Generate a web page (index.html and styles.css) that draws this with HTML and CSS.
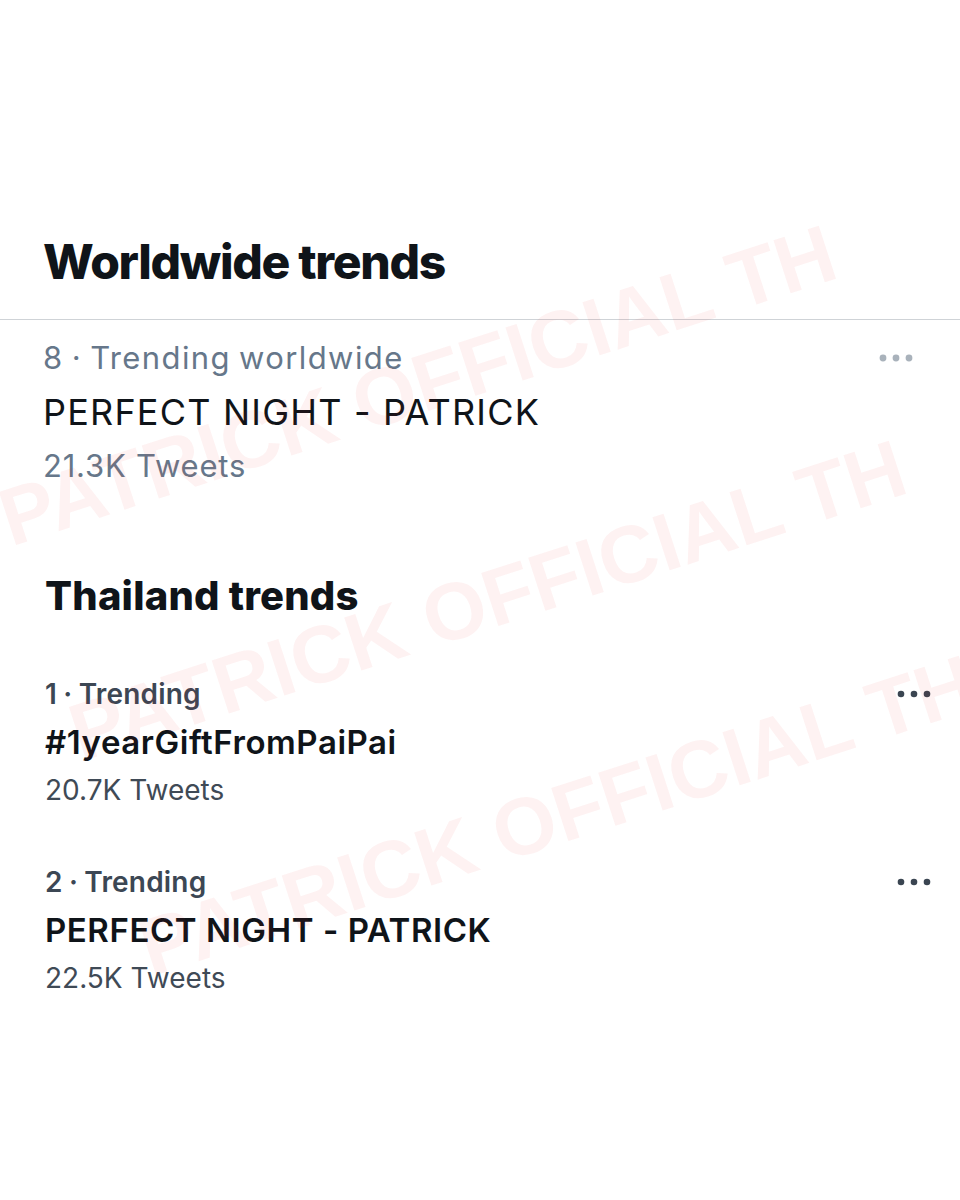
FILE: index.html
```html
<!DOCTYPE html>
<html lang="en">
<head>
  <meta charset="UTF-8">
  <title>Trends</title>
  <link rel="stylesheet" href="styles.css">
</head>
<body>
  <div class="pagina">

    <section class="painel painel-mundo">
      <div class="painel-topo">
        <h2 class="painel-titulo">Worldwide trends</h2>
      </div>

      <div class="trend">
        <div class="trend-textos">
          <div class="trend-meta">8 · Trending worldwide</div>
          <div class="trend-nome">PERFECT NIGHT - PATRICK</div>
          <div class="trend-total">21.3K Tweets</div>
        </div>
        <button class="trend-mais" aria-label="More">
          <svg width="34" height="8" viewBox="0 0 34 8"><circle cx="4" cy="4" r="3.4"/><circle cx="17" cy="4" r="3.4"/><circle cx="30" cy="4" r="3.4"/></svg>
        </button>
      </div>
    </section>

    <section class="painel painel-thai">
      <h2 class="painel-titulo">Thailand trends</h2>

      <div class="trend">
        <div class="trend-textos">
          <div class="trend-meta">1 · Trending</div>
          <div class="trend-nome">#1yearGiftFromPaiPai</div>
          <div class="trend-total">20.7K Tweets</div>
        </div>
        <button class="trend-mais" aria-label="More">
          <svg width="34" height="8" viewBox="0 0 34 8"><circle cx="4" cy="4" r="3.3"/><circle cx="17" cy="4" r="3.3"/><circle cx="30" cy="4" r="3.3"/></svg>
        </button>
      </div>

      <div class="trend">
        <div class="trend-textos">
          <div class="trend-meta">2 · Trending</div>
          <div class="trend-nome">PERFECT NIGHT - PATRICK</div>
          <div class="trend-total">22.5K Tweets</div>
        </div>
        <button class="trend-mais" aria-label="More">
          <svg width="34" height="8" viewBox="0 0 34 8"><circle cx="4" cy="4" r="3.3"/><circle cx="17" cy="4" r="3.3"/><circle cx="30" cy="4" r="3.3"/></svg>
        </button>
      </div>
    </section>

    <div class="marca-dagua" aria-hidden="true">
      <span class="marca marca-1">PATRICK OFFICIAL TH</span>
      <span class="marca marca-2">PATRICK OFFICIAL TH</span>
      <span class="marca marca-3">PATRICK OFFICIAL TH</span>
    </div>

  </div>
</body>
</html>
```

FILE: styles.css
```css
body {
  margin: 0;
  background: #ffffff;
  font-family: 'Inter', 'Liberation Sans', sans-serif;
  color: #0f1419;
}

.pagina {
  position: relative;
  width: 960px;
  height: 1200px;
  overflow: hidden;
  background: #ffffff;
}

/* ---- painel de cima (worldwide) ---- */

.painel-mundo {
  padding-top: 232px;
}

.painel-topo {
  padding: 0 0 27px 43px;
  border-bottom: 1px solid #cfd3d7;
}

.painel-titulo {
  margin: 0;
  font-weight: 700;
}

.painel-mundo .painel-titulo {
  font-size: 48px;
  line-height: 60px;
  font-weight: 800;
  letter-spacing: -1.3px;
}

.trend {
  display: flex;
  justify-content: space-between;
  align-items: flex-start;
}

.trend-textos {
  display: flex;
  flex-direction: column;
}

.trend-mais {
  background: none;
  border: none;
  padding: 0;
  display: flex;
  align-items: center;
  cursor: pointer;
}

.painel-mundo .trend {
  padding: 11px 47px 0 43px;
}

.painel-mundo .trend-meta,
.painel-mundo .trend-total {
  font-size: 31px;
  color: #66778a;
}

.painel-mundo .trend-meta {
  line-height: 54px;
  letter-spacing: 1.4px;
  word-spacing: -2px;
}

.painel-mundo .trend-nome {
  font-size: 36px;
  line-height: 54px;
  font-weight: 400;
  letter-spacing: 1.2px;
  color: #0f1419;
}

.painel-mundo .trend-total {
  line-height: 53px;
  letter-spacing: 0.8px;
}

.painel-mundo .trend-mais {
  height: 54px;
  fill: #a9b2bb;
}

/* ---- painel de baixo (thailand) ---- */

.painel-thai {
  padding: 79px 29px 0 45px;
}

.painel-thai .painel-titulo {
  font-size: 40px;
  line-height: 50px;
  font-weight: 800;
  letter-spacing: 0.2px;
  margin-bottom: 49px;
}

.painel-thai .trend + .trend {
  margin-top: 44px;
}

.painel-thai .trend-meta,
.painel-thai .trend-nome,
.painel-thai .trend-total {
  line-height: 48px;
}

.painel-thai .trend-meta {
  font-size: 28px;
  font-weight: 600;
  color: #3c4754;
  letter-spacing: 0.2px;
  word-spacing: -1px;
}

.painel-thai .trend-nome {
  font-size: 33px;
  font-weight: 600;
  letter-spacing: 0.55px;
}

.painel-thai .trend-total {
  font-size: 28px;
  color: #3f4a56;
}

.painel-thai .trend-mais {
  height: 48px;
  fill: #3a4551;
}

/* ---- marca d'agua ---- */

.marca-dagua {
  position: absolute;
  inset: 0;
  pointer-events: none;
}

.marca {
  position: absolute;
  font-family: 'Liberation Sans', sans-serif;
  font-weight: 700;
  font-size: 81px;
  line-height: 1;
  white-space: nowrap;
  color: rgba(240, 40, 40, 0.06);
  transform-origin: 0 0;
  transform: rotate(-18deg);
}

.marca-1 { left: -10px; top: 482px; }
.marca-2 { left: 60px; top: 697px; }
.marca-3 { left: 130px; top: 912px; }
```
